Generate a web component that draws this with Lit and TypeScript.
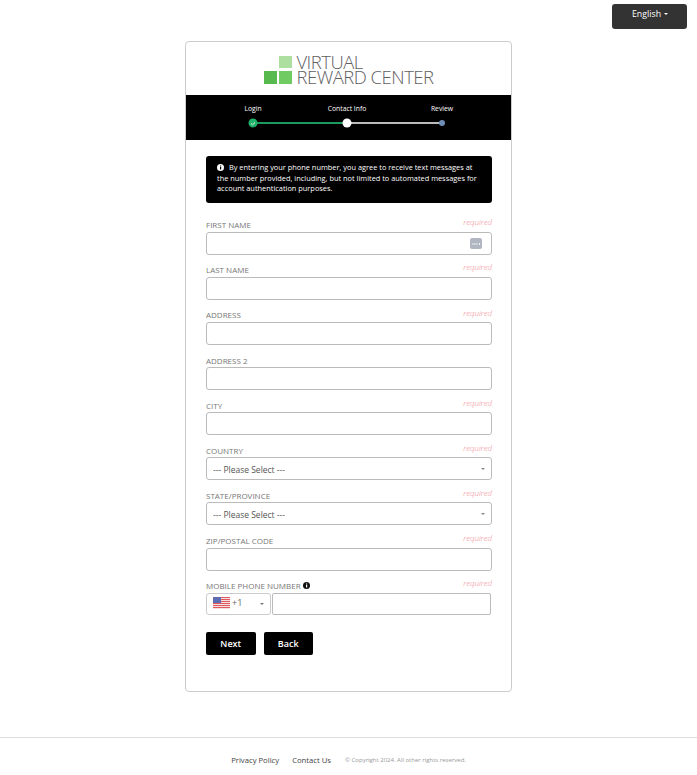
import { LitElement, html, css, svg } from "lit";
import { customElement } from "lit/decorators.js";

const fields: [string, boolean, string][] = [
  ["First Name", true, "key"],
  ["Last Name", true, ""],
  ["Address", true, ""],
  ["Address 2", false, ""],
  ["City", true, ""],
  ["Country", true, "select"],
  ["State/Province", true, "select"],
  ["Zip/Postal Code", true, ""],
];

@customElement("app-root")
export class AppRoot extends LitElement {
  static styles = css`
    :host { display: block; font-family: "Open Sans", sans-serif; color: #555; background: #fff; height: 775px; overflow: hidden; }
    .top { height: 41px; display: flex; justify-content: flex-end; align-items: flex-start; padding-right: 10px; box-sizing: border-box; }
    .lang { margin-top: 4px; width: 75px; height: 25px; background: #333; color: #fff; border-radius: 3px; font-size: 8.8px; display: flex; align-items: center; justify-content: center; gap: 3px; padding: 0 0 5px 1px; box-sizing: border-box; }
    .caret { width: 0; height: 0; border-left: 2px solid transparent; border-right: 2px solid transparent; border-top: 2px solid currentColor; }
    .card { width: 327px; height: 651px; margin: 0 auto; box-sizing: border-box; border: 1px solid #ccc; border-radius: 4px; display: flex; flex-direction: column; }
    .logo { height: 53px; display: flex; justify-content: center; align-items: center; gap: 4px; padding: 3px 0 0 1px; box-sizing: border-box; }
    .squares { display: grid; grid-template-columns: 13px 13px; grid-template-rows: 12px 13px; gap: 3px 2px; }
    .s1 { grid-column: 2; background: #addfa0; }
    .s2 { background: #58b94e; }
    .s3 { background: #6fcb62; }
    .logotext { font-weight: 300; font-size: 18.5px; line-height: 15px; color: #5f6062; letter-spacing: -0.5px; white-space: nowrap; margin-top: -2px; }
    .steps { height: 45px; background: #000; color: #fff; position: relative; flex: none; font-size: 6.8px; }
    .steplabel { position: absolute; top: 8px; transform: translateX(-50%); white-space: nowrap; line-height: 11px; }
    .line { position: absolute; top: 27px; height: 2px; }
    .dot { position: absolute; border-radius: 50%; transform: translate(-50%, -50%); top: 28px; }
    .d1 { left: 67px; width: 9px; height: 9px; background: #21b26a; display: flex; align-items: center; justify-content: center; }
    .d2 { left: 161px; width: 9px; height: 9px; background: #fff; }
    .d3 { left: 256px; width: 6px; height: 6px; background: #6f8db5; }
    .form { padding: 16px 19px 0 20px; display: flex; flex-direction: column; }
    .notice { background: #000; color: #fff; border-radius: 3px; height: 47px; box-sizing: border-box; padding: 6px 14px 6px 11px; font-size: 7.4px; line-height: 10.7px; margin-bottom: 6.9px; }
    .notice svg { vertical-align: -1px; margin: 0 3px 0 0; }
    .field { display: flex; flex-direction: column; }
    .lab { height: 22.08px; display: flex; justify-content: space-between; }
    .name { font-size: 8px; text-transform: uppercase; color: #777; align-self: flex-end; line-height: 11px; margin-bottom: 1.7px; display: flex; align-items: center; gap: 2px; }
    .req { font-size: 7.8px; font-style: italic; font-weight: 300; color: #f0808a; line-height: 11px; margin-top: 7.5px; }
    .input { height: 23px; box-sizing: border-box; border: 1px solid #bbb; border-radius: 3px; background: #fff; display: flex; align-items: center; justify-content: space-between; padding: 1px 6px 0; font-size: 8.5px; color: #555; }
    .input .caret { color: #888; }
    .key { width: 12px; height: 11px; margin-right: 3px; background: #b0b7c3; border-radius: 2px; color: #fff; display: flex; align-items: center; justify-content: center; }
    .phone { display: flex; gap: 1.5px; }
    .cc { width: 64.5px; height: 22px; box-sizing: border-box; border: 1px solid #ccc; border-radius: 3px; display: flex; align-items: center; padding: 0 6px 2px 6px; font-size: 9px; color: #666; gap: 2px; }
    .cc svg { flex: none; }
    .cc .caret { margin-left: auto; margin-top: 3px; color: #777; }
    .num { width: 219px; height: 22px; box-sizing: border-box; border: 1px solid #bbb; border-radius: 2px; }
    .btns { display: flex; gap: 8px; margin-top: 17px; }
    .btn { width: 49.5px; height: 23px; background: #000; color: #fff; font-size: 9px; font-weight: 600; border-radius: 2px; display: flex; align-items: center; justify-content: center; }
    .footer { margin-top: 45px; border-top: 1px solid #ddd; display: flex; justify-content: center; align-items: center; gap: 13px; padding: 15px 0 0 0; font-size: 7.7px; color: #444; line-height: 12px; }
    .copy { font-size: 6px; color: #999; margin-left: 1px; padding-top: 1px; }
  `;

  info(fill: string, glyph: string) {
    return html`<svg width="7" height="7" viewBox="0 0 14 14"><circle cx="7" cy="7" r="7" fill="${fill}"/><rect x="6" y="6" width="2.4" height="5" fill="${glyph}"/><rect x="6" y="3" width="2.4" height="2" fill="${glyph}"/></svg>`;
  }

  flag() {
    return html`<svg width="17" height="12" viewBox="0 0 17 12">
      <rect width="17" height="12" fill="#f6dede"/>
      ${[0, 2, 4, 6, 8, 10].map((y) => svg`<rect y="${y}" width="17" height="1" fill="#dc5a60"/>`)}
      <rect width="8" height="6" fill="#5e6cb4"/>
    </svg>`;
  }

  render() {
    return html`
      <div class="top"><div class="lang">English <span class="caret"></span></div></div>
      <div class="card">
        <div class="logo">
          <div class="squares"><div class="s1"></div><div class="s2"></div><div class="s3"></div></div>
          <div class="logotext">VIRTUAL<br />REWARD CENTER</div>
        </div>
        <div class="steps">
          <span class="steplabel" style="left:67px">Login</span>
          <span class="steplabel" style="left:161px">Contact Info</span>
          <span class="steplabel" style="left:256px">Review</span>
          <div class="line" style="left:67px;width:94px;background:#1a9a5c"></div>
          <div class="line" style="left:161px;width:95px;background:#bbb"></div>
          <div class="dot d1"><svg width="5" height="4" viewBox="0 0 5 4"><path d="M0.5 2 L2 3.3 L4.5 1" stroke="#fff" fill="none" stroke-width="0.9"/></svg></div>
          <div class="dot d2"></div>
          <div class="dot d3"></div>
        </div>
        <div class="form">
          <div class="notice">${this.info("#fff", "#000")} By entering your phone number, you agree to receive text messages at the number provided, including, but not limited to automated messages for account authentication purposes.</div>
          ${fields.map(([n, r, k]) => html`
            <div class="field">
              <div class="lab"><span class="name">${n}</span>${r ? html`<span class="req">required</span>` : ""}</div>
              <div class="input">
                ${k === "select" ? html`<span>--- Please Select ---</span><span class="caret"></span>` : ""}
                ${k === "key" ? html`<span></span><span class="key"><svg width="8" height="2" viewBox="0 0 8 2"><circle cx="1" cy="1" r=".7" fill="#fff"/><circle cx="3" cy="1" r=".7" fill="#fff"/><circle cx="5" cy="1" r=".7" fill="#fff"/><rect x="7" width=".8" height="2" fill="#fff"/></svg></span>` : ""}
              </div>
            </div>`)}
          <div class="field">
            <div class="lab"><span class="name">Mobile Phone Number ${this.info("#111", "#fff")}</span><span class="req">required</span></div>
            <div class="phone">
              <div class="cc">${this.flag()} +1 <span class="caret"></span></div>
              <div class="num"></div>
            </div>
          </div>
          <div class="btns"><div class="btn">Next</div><div class="btn">Back</div></div>
        </div>
      </div>
      <div class="footer"><span>Privacy Policy</span><span>Contact Us</span><span class="copy">© Copyright 2024. All other rights reserved.</span></div>
    `;
  }
}
